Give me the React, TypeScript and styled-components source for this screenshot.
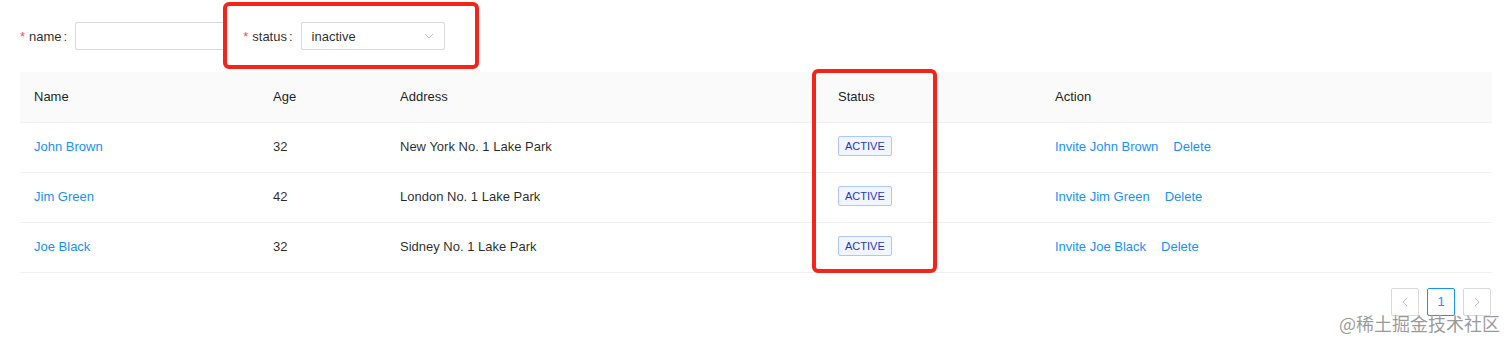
import React from "react";
import styled, { createGlobalStyle } from "styled-components";

const GlobalStyle = createGlobalStyle`
  html, body {
    margin: 0;
    padding: 0;
    background: #ffffff;
    font-family: "Liberation Sans", Arial, sans-serif;
    font-size: 13px;
    color: rgba(0, 0, 0, 0.85);
  }
`;

const Page = styled.div`
  position: relative;
  width: 1512px;
  height: 346px;
  box-sizing: border-box;
  padding: 22px 20px 0 20px;
  overflow: hidden;
`;

const FormRow = styled.div`
  display: flex;
  align-items: center;
  height: 28px;
`;

const FormItem = styled.div<{ $gap?: number }>`
  display: flex;
  align-items: center;
  margin-right: ${({ $gap }) => $gap ?? 16}px;
`;

const Label = styled.label`
  display: flex;
  align-items: center;
  white-space: nowrap;
  margin-right: 8px;
  color: rgba(0, 0, 0, 0.85);
`;

const Required = styled.span`
  color: #ff4d4f;
  margin-right: 4px;
  font-size: 13px;
`;

const Colon = styled.span`
  margin-left: 2px;
`;

const Input = styled.input`
  box-sizing: border-box;
  width: 152px;
  height: 28px;
  border: 1px solid #d9d9d9;
  border-radius: 2px;
  padding: 0 10px;
  font: inherit;
  outline: none;
`;

const Select = styled.div`
  box-sizing: border-box;
  width: 144px;
  height: 28px;
  border: 1px solid #d9d9d9;
  border-radius: 2px;
  padding: 0 10px;
  display: flex;
  align-items: center;
  justify-content: space-between;
  color: rgba(0, 0, 0, 0.85);
`;

const Annotation = styled.div<{ $left: number; $top: number; $w: number; $h: number }>`
  position: absolute;
  left: ${({ $left }) => $left}px;
  top: ${({ $top }) => $top}px;
  width: ${({ $w }) => $w}px;
  height: ${({ $h }) => $h}px;
  box-sizing: border-box;
  border: 4px solid #f5231a;
  border-radius: 6px;
  pointer-events: none;
`;

const TableWrap = styled.div`
  position: relative;
  margin-top: 22px;
`;

const Table = styled.table`
  width: 1472px;
  border-collapse: collapse;
  table-layout: fixed;
`;

const Th = styled.th<{ $w: number }>`
  width: ${({ $w }) => $w}px;
  height: 50px;
  box-sizing: border-box;
  padding: 0 14px;
  text-align: left;
  font-weight: 500;
  color: rgba(0, 0, 0, 0.9);
  background: #fafafa;
  border-bottom: 1px solid #f0f0f0;
`;

const Td = styled.td`
  height: 50px;
  box-sizing: border-box;
  padding: 0 14px 2px;
  border-bottom: 1px solid #f0f0f0;
  color: rgba(0, 0, 0, 0.85);
`;

const Link = styled.a<{ $gap?: number }>`
  color: #1890ff;
  text-decoration: none;
  margin-right: ${({ $gap }) => $gap ?? 0}px;
  cursor: pointer;
`;

const Tag = styled.span`
  display: inline-block;
  box-sizing: border-box;
  height: 20px;
  line-height: 18px;
  padding: 0 6px;
  font-size: 11px;
  color: #1d39c4;
  background: #f0f5ff;
  border: 1px solid #adc6ff;
  border-radius: 2px;
`;

const Pager = styled.div`
  display: flex;
  justify-content: flex-end;
  gap: 8px;
  margin-top: 15px;
  padding-right: 1px;
`;

const PageButton = styled.div<{ $active?: boolean }>`
  box-sizing: border-box;
  width: 28px;
  height: 28px;
  display: flex;
  align-items: center;
  justify-content: center;
  border: 1px solid ${({ $active }) => ($active ? "#1890ff" : "#d9d9d9")};
  border-radius: 2px;
  color: ${({ $active }) => ($active ? "#1890ff" : "rgba(0,0,0,0.25)")};
  font-size: 13px;
`;

const Watermark = styled.div`
  position: absolute;
  right: 12px;
  bottom: 12px;
  font-family: "Noto Sans CJK SC", "Liberation Sans", sans-serif;
  font-size: 18px;
  line-height: 22px;
  color: rgba(120, 120, 120, 0.75);
  text-shadow: 0 0 1px rgba(255, 255, 255, 0.9);
  pointer-events: none;
`;

const Chevron = ({ dir }: { dir: "down" | "left" | "right" }) => {
  const d =
    dir === "down" ? "M1 1 L5 5 L9 1" : dir === "left" ? "M5 1 L1 5 L5 9" : "M1 1 L5 5 L1 9";
  const w = dir === "down" ? 10 : 6;
  const h = dir === "down" ? 6 : 10;
  return (
    <svg width={w} height={h} viewBox={`0 0 ${w} ${h}`} fill="none">
      <path d={d} stroke="#bfbfbf" strokeWidth="1" />
    </svg>
  );
};

const rows = [
  { name: "John Brown", age: 32, address: "New York No. 1 Lake Park" },
  { name: "Jim Green", age: 42, address: "London No. 1 Lake Park" },
  { name: "Joe Black", age: 32, address: "Sidney No. 1 Lake Park" },
];

export default function App() {
  return (
    <Page>
      <GlobalStyle />
      <FormRow>
        <FormItem $gap={16}>
          <Label>
            <Required>*</Required>name<Colon>:</Colon>
          </Label>
          <Input />
        </FormItem>
        <FormItem>
          <Label>
            <Required>*</Required>status<Colon>:</Colon>
          </Label>
          <Select>
            <span>inactive</span>
            <Chevron dir="down" />
          </Select>
        </FormItem>
      </FormRow>
      <Annotation $left={223} $top={2} $w={256} $h={67} />

      <TableWrap>
        <Table>
          <thead>
            <tr>
              <Th $w={239}>Name</Th>
              <Th $w={127}>Age</Th>
              <Th $w={438}>Address</Th>
              <Th $w={217}>Status</Th>
              <Th $w={451}>Action</Th>
            </tr>
          </thead>
          <tbody>
            {rows.map((r) => (
              <tr key={r.name}>
                <Td>
                  <Link>{r.name}</Link>
                </Td>
                <Td>{r.age}</Td>
                <Td>{r.address}</Td>
                <Td>
                  <Tag>ACTIVE</Tag>
                </Td>
                <Td>
                  <Link $gap={15}>Invite {r.name}</Link>
                  <Link>Delete</Link>
                </Td>
              </tr>
            ))}
          </tbody>
        </Table>
        <Annotation $left={792} $top={-3} $w={125} $h={204} />
        <Pager>
          <PageButton>
            <Chevron dir="left" />
          </PageButton>
          <PageButton $active>1</PageButton>
          <PageButton>
            <Chevron dir="right" />
          </PageButton>
        </Pager>
      </TableWrap>
      <Watermark>@稀土掘金技术社区</Watermark>
    </Page>
  );
}
